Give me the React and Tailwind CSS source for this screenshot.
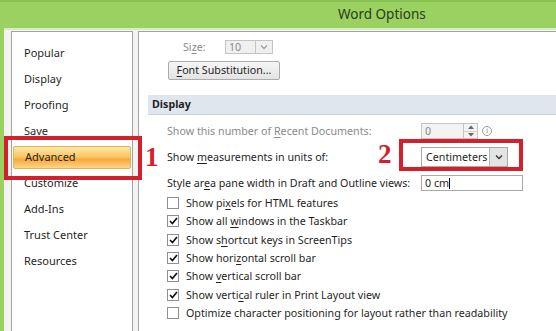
import React from "react";

const navItems = [
  "Popular",
  "Display",
  "Proofing",
  "Save",
  "Advanced",
  "Customize",
  "Add-Ins",
  "Trust Center",
  "Resources",
];

const checks = [
  { pre: "Show pi", u: "x", post: "els for HTML features", on: false },
  { pre: "Show all ", u: "w", post: "indows in the Taskbar", on: true },
  { pre: "Show s", u: "h", post: "ortcut keys in ScreenTips", on: true },
  { pre: "Show hori", u: "z", post: "ontal scroll bar", on: true },
  { pre: "Show ", u: "v", post: "ertical scroll bar", on: true },
  { pre: "Show verti", u: "c", post: "al ruler in Print Layout view", on: true },
  {
    pre: "Optimize character positioning for layout rather than readability",
    u: "",
    post: "",
    on: false,
  },
];

const U = ({ children }) => (
  <span className="underline underline-offset-[2px] decoration-1">{children}</span>
);

const Chevron = ({ color = "#444" }) => (
  <svg width="8" height="6" viewBox="0 0 8 6">
    <path d="M1 1.5 L4 4.5 L7 1.5" fill="none" stroke={color} strokeWidth="1.3" />
  </svg>
);

const Checkbox = ({ on }) => (
  <div className="w-[12px] h-[12px] border border-[#8e8f8f] bg-white flex items-center justify-center shrink-0">
    {on && (
      <svg width="9" height="8" viewBox="0 0 9 8">
        <path d="M1 4 L3.4 6.5 L8 1" fill="none" stroke="#111" strokeWidth="1.7" />
      </svg>
    )}
  </div>
);

export default function App() {
  return (
    <div className="relative w-[556px] h-[331px] overflow-hidden bg-[#9bd160] font-['Noto_Sans',sans-serif] text-[10.7px] text-[#1f1f1f] flex flex-col">
      {/* title bar */}
      <div className="h-[28px] shrink-0 flex items-center pl-[338px] border-t-2 border-[#8cc253]">
        <span className="text-[13.5px] text-[#2b3a22] leading-none">Word Options</span>
      </div>

      {/* body */}
      <div className="flex-1 ml-[4px] bg-[#f3f4f1] border-t-[2px] border-[#d8ecc4] flex pl-[7px] pt-[1px] gap-[5px]">
        {/* nav */}
        <div className="w-[122px] shrink-0 bg-white border border-b-0 border-[#a3a3a3] pt-[8px] text-[11px]">
          {navItems.map((item) => (
            <div key={item} className="h-[26px] flex items-center">
              {item === "Advanced" ? (
                <div className="mx-[1px] w-full h-[23px] flex items-center pl-[11px] rounded-[2px] border border-[#eab04e] bg-[linear-gradient(#fde9a8_0%,#fbc768_45%,#f7aa3c_60%,#fcd58a_100%)]">
                  {item}
                </div>
              ) : (
                <span className="pl-[12px]">{item}</span>
              )}
            </div>
          ))}
        </div>

        {/* content */}
        <div className="flex-1 bg-white border-l border-t border-[#a3a3a3] pt-[8px]">
          <div className="flex items-center h-[14px]">
            <span className="ml-[44px] w-[42px] text-[#8a8a8a]">
              Si<U>z</U>e:
            </span>
            <div className="w-[48px] h-[14px] bg-[#f0f0f0] border border-[#c4c4c4] flex">
              <span className="flex-1 pl-[3px] leading-[12px] text-[#8a8a8a]">10</span>
              <div className="w-[17px] border-l border-[#c4c4c4] flex items-center justify-center">
                <Chevron color="#a0a0a0" />
              </div>
            </div>
          </div>

          <div className="mt-[7px] ml-[29px] w-[112px] h-[19px] border border-[#acacac] rounded-[2px] bg-[linear-gradient(#f6f6f6,#e3e3e3)] flex items-center justify-center">
            <span>
              <U>F</U>ont Substitution...
            </span>
          </div>

          <div className="mt-[15px] ml-[9px] h-[20px] bg-[#dfe6ee] border-b border-[#cbd4de] flex items-center pl-[4px] font-bold">
            Display
          </div>

          <div className="pl-[28px]">
            <div className="mt-[8px] h-[16px] flex items-center">
              <span className="w-[254px] text-[#8a8a8a]">
                Show this number of <U>R</U>ecent Documents:
              </span>
              <div className="w-[57px] h-[16px] bg-[#f3f3f3] border border-[#c4c4c4] flex">
                <span className="flex-1 pl-[3px] leading-[14px] text-[#8a8a8a]">0</span>
                <div className="w-[14px] border-l border-[#c4c4c4] flex flex-col">
                  <div className="flex-1 flex items-center justify-center border-b border-[#d4d4d4]">
                    <svg width="6" height="4" viewBox="0 0 6 4">
                      <path d="M0 4 L3 0.5 L6 4 Z" fill="#666" />
                    </svg>
                  </div>
                  <div className="flex-1 flex items-center justify-center">
                    <svg width="6" height="4" viewBox="0 0 6 4">
                      <path d="M0 0 L3 3.5 L6 0 Z" fill="#666" />
                    </svg>
                  </div>
                </div>
              </div>
              <div className="ml-[4px] w-[10px] h-[10px] rounded-full border border-[#9a9a9a] flex items-center justify-center text-[7px] leading-none text-[#8a8a8a] font-['DejaVu_Serif',serif]">
                i
              </div>
            </div>

            <div className="mt-[8px] h-[20px] flex items-center">
              <span className="w-[254px]">
                Show <U>m</U>easurements in units of:
              </span>
              <div className="w-[87px] h-[20px] bg-white border border-[#a9a9a9] flex">
                <span className="flex-1 pl-[4px] leading-[18px]">Centimeters</span>
                <div className="w-[18px] bg-[#e4e4e4] border-l border-[#b5b5b5] flex items-center justify-center">
                  <Chevron color="#333" />
                </div>
              </div>
            </div>

            <div className="mt-[8px] h-[16px] flex items-center">
              <span className="w-[254px]">
                Style ar<U>e</U>a pane width in Draft and Outline views:
              </span>
              <div className="w-[102px] h-[16px] bg-white border border-[#a9a9a9] flex items-center pl-[3px]">
                <span className="leading-none">0 cm</span>
                <span className="w-px h-[11px] bg-black" />
              </div>
            </div>

            <div className="mt-[3px]">
              {checks.map((c) => (
                <div key={c.pre} className="h-[18.3px] flex items-center gap-[7px]">
                  <Checkbox on={c.on} />
                  <span className="whitespace-nowrap">
                    {c.pre}
                    {c.u && <U>{c.u}</U>}
                    {c.post}
                  </span>
                </div>
              ))}
            </div>
          </div>
        </div>
      </div>

      {/* annotations */}
      <div className="absolute left-[4px] top-[136px] w-[138px] h-[44px] border-[4px] border-[#d3202a]" />
      <div className="absolute left-[145px] top-[144px] text-[27px] leading-none font-bold text-[#d3202a] font-['Liberation_Serif',serif]">
        1
      </div>
      <div className="absolute left-[399px] top-[139px] w-[124px] h-[32px] border-[4px] border-[#d3202a]" />
      <div className="absolute left-[378px] top-[141px] text-[27px] leading-none font-bold text-[#d3202a] font-['Liberation_Serif',serif]">
        2
      </div>
    </div>
  );
}
